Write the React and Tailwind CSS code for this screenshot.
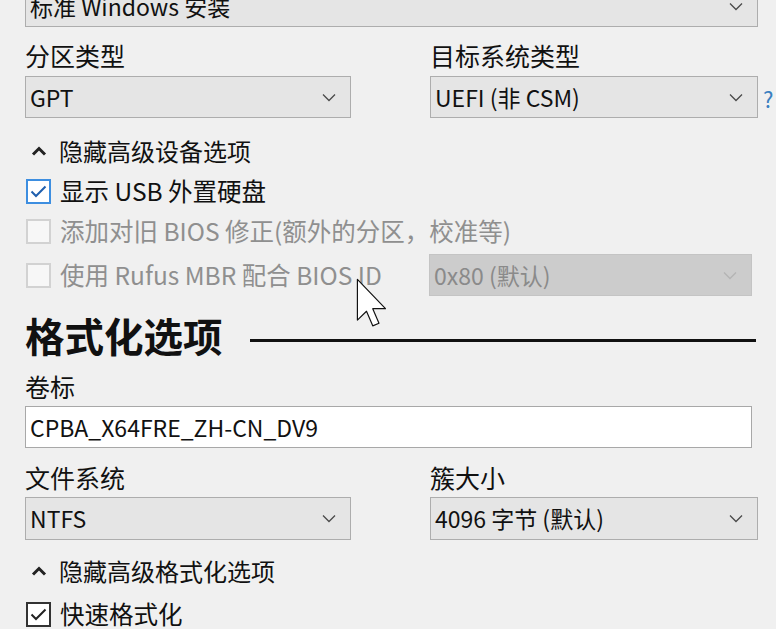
import React from 'react';

const font = { fontFamily: '"Noto Sans CJK SC", "Noto Sans", sans-serif' };

const Chevron = ({ disabled }) => (
  <svg width="14" height="9" viewBox="0 0 14 9" className="shrink-0">
    <path
      d="M1 1.5 L7 7.5 L13 1.5"
      fill="none"
      stroke={disabled ? '#b4b4b4' : '#4a4a4a'}
      strokeWidth="1.3"
    />
  </svg>
);

const Select = ({ value, className = '', disabled }) => (
  <div
    className={`flex h-[42px] items-center justify-between border pl-[4px] pr-[14px] text-[23px] ${
      disabled
        ? 'border-[#c4c4c4] bg-[#cccccc] text-[#8a8a8a]'
        : 'border-[#adadad] bg-[#e5e5e5] text-[#111]'
    } ${className}`}
  >
    <span className="whitespace-nowrap leading-none">{value}</span>
    <Chevron disabled={disabled} />
  </div>
);

const Label = ({ children, className = '' }) => (
  <div className={`h-[30px] text-[25px] leading-[30px] text-[#111] ${className}`}>{children}</div>
);

const Caret = () => (
  <svg width="16" height="10" viewBox="0 0 16 10" className="shrink-0">
    <path d="M2 8.5 L8 2.5 L14 8.5" fill="none" stroke="#222" strokeWidth="3" />
  </svg>
);

const Toggle = ({ children, className = '' }) => (
  <div className={`flex h-[30px] items-center gap-[12px] pl-[6px] text-[24px] text-[#111] ${className}`}>
    <Caret />
    <span className="leading-none">{children}</span>
  </div>
);

const Checkbox = ({ checked, disabled, accent }) => {
  let box = 'border-[#333] bg-white';
  if (disabled) box = 'border-[#d2d2d2] bg-[#f7f7f7]';
  else if (accent) box = 'border-[#3d8ee0] bg-white';
  return (
    <div className={`flex h-[25px] w-[25px] shrink-0 items-center justify-center border-2 ${box}`}>
      {checked && (
        <svg width="17" height="13" viewBox="0 0 17 13">
          <path
            d="M1.5 6.5 L6 11 L15.5 1.5"
            fill="none"
            stroke={accent ? '#1f5fae' : '#222'}
            strokeWidth="2"
          />
        </svg>
      )}
    </div>
  );
};

const CheckRow = ({ label, checked, disabled, accent, className = '', children }) => (
  <div className={`flex items-center ${className}`}>
    <div className="flex w-[405px] items-center gap-[9px] pl-[1px]">
      <Checkbox checked={checked} disabled={disabled} accent={accent} />
      <span
        className={`whitespace-nowrap text-[24.5px] leading-none ${
          disabled ? 'text-[#8f8f8f]' : 'text-[#111]'
        }`}
      >
        {label}
      </span>
    </div>
    {children}
  </div>
);

// mouse pointer resting over the BIOS ID row
const Cursor = () => (
  <svg
    width="34"
    height="52"
    viewBox="0 0 13 20"
    className="pointer-events-none absolute left-[356px] top-[278px]"
  >
    <path
      d="M0.5 0.5 L0.5 16.2 L4 12.8 L6.4 18.4 L8.8 17.4 L6.4 11.8 L11.3 11.8 Z"
      fill="#fff"
      stroke="#111"
      strokeWidth="0.45"
      strokeLinejoin="round"
    />
  </svg>
);

export default function App() {
  return (
    <div className="relative h-[629px] w-[776px] overflow-hidden bg-[#f0f0f0]" style={font}>
      <div className="pl-[25px]">
        <Select value="标准 Windows 安装" className="-mt-[15px] w-[733px]" />

        <div className="flex">
          <div className="w-[326px]">
            <Label className="mt-[13px] mb-[6px]">分区类型</Label>
            <Select value="GPT" />
          </div>
          <div className="ml-[79px] w-[328px]">
            <Label className="mt-[13px] mb-[6px]">目标系统类型</Label>
            <div className="relative">
              <Select value="UEFI (非 CSM)" />
              <span className="absolute left-[333px] top-[6px] text-[22px] text-[#3a7fc0]">?</span>
            </div>
          </div>
        </div>

        <Toggle className="mt-[18px]">隐藏高级设备选项</Toggle>

        <CheckRow label="显示 USB 外置硬盘" checked accent className="mt-[5px] h-[40px]" />
        <CheckRow label="添加对旧 BIOS 修正(额外的分区，校准等)" disabled className="h-[40px]" />
        <CheckRow label="使用 Rufus MBR 配合 BIOS ID" disabled className="mt-[3px] h-[42px]">
          <Select value="0x80 (默认)" disabled className="w-[323px] -ml-[1px]" />
        </CheckRow>

        <div className="mt-[17px] flex h-[44px] items-center">
          <h2 className="text-[39.5px] font-bold leading-none text-[#111]">格式化选项</h2>
          <div className="ml-[27px] mt-[10px] h-[3px] w-[506px] bg-[#111]" />
        </div>

        <Label className="mt-[14px] mb-[5px]">卷标</Label>
        <div className="flex h-[42px] w-[727px] items-center border border-[#a8a8a8] bg-white pl-[4px] text-[23px] text-[#111]">
          CPBA_X64FRE_ZH-CN_DV9
        </div>

        <div className="flex">
          <div className="w-[326px]">
            <Label className="mt-[14px] mb-[5px]">文件系统</Label>
            <Select value="NTFS" className="h-[43px]" />
          </div>
          <div className="ml-[79px] w-[328px]">
            <Label className="mt-[14px] mb-[5px]">簇大小</Label>
            <Select value="4096 字节 (默认)" className="h-[43px]" />
          </div>
        </div>

        <Toggle className="mt-[16px]">隐藏高级格式化选项</Toggle>

        <CheckRow label="快速格式化" checked className="mt-[13px] h-[30px]" />
      </div>

      <Cursor />
    </div>
  );
}
